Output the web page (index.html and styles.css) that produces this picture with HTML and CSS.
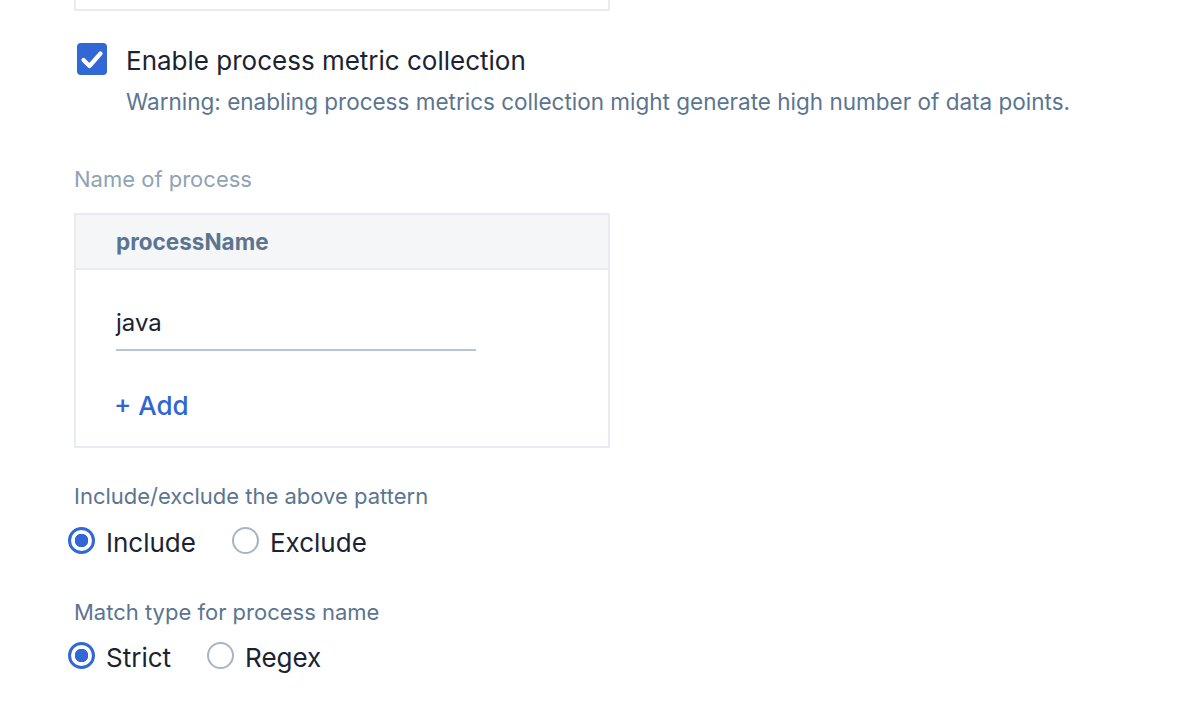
FILE: index.html
```html
<!DOCTYPE html>
<html>
<head>
<meta charset="utf-8">
<link rel="stylesheet" href="styles.css">
</head>
<body>
<div class="page">
  <div class="top-box"></div>

  <div class="check-row">
    <span class="checkbox">
      <svg width="30" height="32" viewBox="0 0 30 32"><path d="M6.5 17 L12.5 23 L23.5 10.5" fill="none" stroke="#fff" stroke-width="4.2" stroke-linecap="round" stroke-linejoin="round"/></svg>
    </span>
    <div class="check-text">
      <div class="check-label">Enable process metric collection</div>
      <div class="warning">Warning: enabling process metrics collection might generate high number of data points.</div>
    </div>
  </div>

  <div class="field-label light">Name of process</div>
  <div class="table">
    <div class="table-head">processName</div>
    <div class="table-body">
      <div class="input">java</div>
      <div class="add">+ Add</div>
    </div>
  </div>

  <div class="field-label first">Include/exclude the above pattern</div>
  <div class="radios">
    <span class="radio checked"></span><span class="radio-label">Include</span>
    <span class="radio"></span><span class="radio-label">Exclude</span>
  </div>

  <div class="field-label second">Match type for process name</div>
  <div class="radios">
    <span class="radio checked"></span><span class="radio-label">Strict</span>
    <span class="radio"></span><span class="radio-label">Regex</span>
  </div>
</div>
</body>
</html>
```

FILE: styles.css
```css
* { box-sizing: border-box; }
body {
  margin: 0;
  background: #fff;
  font-family: Inter, "Open Sans", "Liberation Sans", sans-serif;
  color: #1b2333;
}
.page {
  padding-left: 74px;
}
.top-box {
  width: 536px;
  height: 11px;
  border: 2px solid #e8ecf0;
  border-top: none;
}
.check-row {
  display: flex;
  margin-top: 32px;
  margin-left: 3px;
}
.checkbox {
  width: 30px;
  height: 32px;
  border-radius: 4px;
  background: #3168d6;
  display: flex;
  flex: none;
}
.check-text {
  margin-left: 19px;
  margin-top: 2px;
}
.check-label {
  font-size: 26px;
  line-height: 32px;
  color: #1b2333;
}
.warning {
  font-size: 22.5px;
  line-height: 28px;
  color: #5b7590;
  margin-top: 11px;
}
.field-label {
  font-size: 22px;
  line-height: 28px;
  color: #5b7590;
}
.field-label.light {
  color: #8fa2b6;
  margin-top: 49px;
}
.table {
  width: 536px;
  margin-top: 20px;
  border: 2px solid #e8ecf0;
}
.table-head {
  height: 55px;
  background: #f5f6f8;
  border-bottom: 2px solid #e8ecf0;
  padding-left: 40px;
  font-size: 22.5px;
  font-weight: 700;
  color: #5b7590;
  display: flex;
  align-items: center;
}
.table-body {
  padding: 38px 0 24px 40px;
}
.input {
  width: 360px;
  font-size: 24px;
  line-height: 30px;
  color: #1b2333;
  padding-bottom: 11px;
  border-bottom: 2px solid #b8c5d3;
}
.add {
  margin-top: 39px;
  margin-left: -2px;
  font-size: 26px;
  font-weight: 500;
  line-height: 32px;
  color: #2f66d4;
}
.field-label.first {
  margin-top: 34px;
}
.field-label.second {
  margin-top: 39px;
}
.radios {
  display: flex;
  align-items: center;
  margin-left: -6px;
  margin-top: 17px;
}
.field-label.second + .radios {
  margin-top: 16px;
}
.radio {
  width: 27px;
  height: 27px;
  border-radius: 50%;
  border: 2.5px solid #a6b5c6;
  flex: none;
  margin-top: -6px;
}
.radio.checked {
  border: 3px solid #3168d6;
  background: radial-gradient(circle, #3168d6 0 6.5px, #fff 7px);
}
.radio-label {
  font-size: 26px;
  line-height: 32px;
  margin-left: 11px;
  margin-right: 36px;
  color: #1b2333;
}
```
